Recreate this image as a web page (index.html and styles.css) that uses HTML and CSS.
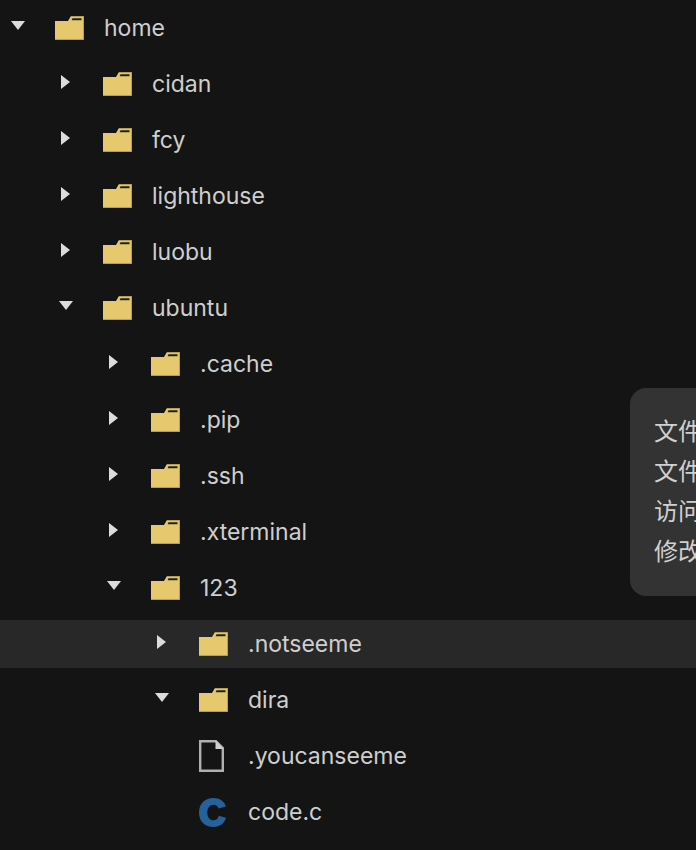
FILE: index.html
```html
<!DOCTYPE html>
<html lang="zh">
<head>
<meta charset="utf-8">
<title>File tree</title>
<link rel="stylesheet" href="styles.css">
</head>
<body>
<svg class="defs" width="0" height="0" aria-hidden="true">
  <defs>
    <symbol id="folder" viewBox="0 0 29 24">
      <path d="M0 5H13L16 0H29V24H0Z" fill="#e6c86e"/>
      <path d="M17.500 2.200H26.500V4.200H16.600Z" fill="#231f17"/>
      <path d="M0 23.300H29V24H0ZM28.300 0H29V24H28.300ZM16 0H29V.7H16Z" fill="#a88f4a"/>
    </symbol>
    <symbol id="open" viewBox="0 0 14 10"><path d="M0 0H14L7 9Z" fill="#dcdcdc"/></symbol>
    <symbol id="closed" viewBox="0 0 10 14"><path d="M0 0L9 7L0 14Z" fill="#dcdcdc"/></symbol>
  </defs>
</svg>
<ul class="tree">
  <li class="row l0"><span class="tw"><svg class="arrow-open"><use href="#open"/></svg></span><svg class="icon"><use href="#folder"/></svg><span class="name">home</span></li>
  <li class="row l1"><span class="tw"><svg class="arrow-closed"><use href="#closed"/></svg></span><svg class="icon"><use href="#folder"/></svg><span class="name">cidan</span></li>
  <li class="row l1"><span class="tw"><svg class="arrow-closed"><use href="#closed"/></svg></span><svg class="icon"><use href="#folder"/></svg><span class="name">fcy</span></li>
  <li class="row l1"><span class="tw"><svg class="arrow-closed"><use href="#closed"/></svg></span><svg class="icon"><use href="#folder"/></svg><span class="name">lighthouse</span></li>
  <li class="row l1"><span class="tw"><svg class="arrow-closed"><use href="#closed"/></svg></span><svg class="icon"><use href="#folder"/></svg><span class="name">luobu</span></li>
  <li class="row l1"><span class="tw"><svg class="arrow-open"><use href="#open"/></svg></span><svg class="icon"><use href="#folder"/></svg><span class="name">ubuntu</span></li>
  <li class="row l2"><span class="tw"><svg class="arrow-closed"><use href="#closed"/></svg></span><svg class="icon"><use href="#folder"/></svg><span class="name">.cache</span></li>
  <li class="row l2"><span class="tw"><svg class="arrow-closed"><use href="#closed"/></svg></span><svg class="icon"><use href="#folder"/></svg><span class="name">.pip</span></li>
  <li class="row l2"><span class="tw"><svg class="arrow-closed"><use href="#closed"/></svg></span><svg class="icon"><use href="#folder"/></svg><span class="name">.ssh</span></li>
  <li class="row l2"><span class="tw"><svg class="arrow-closed"><use href="#closed"/></svg></span><svg class="icon"><use href="#folder"/></svg><span class="name">.xterminal</span></li>
  <li class="row l2"><span class="tw"><svg class="arrow-open"><use href="#open"/></svg></span><svg class="icon"><use href="#folder"/></svg><span class="name">123</span></li>
  <li class="row l3 hover"><span class="tw"><svg class="arrow-closed"><use href="#closed"/></svg></span><svg class="icon"><use href="#folder"/></svg><span class="name">.notseeme</span></li>
  <li class="row l3"><span class="tw"><svg class="arrow-open"><use href="#open"/></svg></span><svg class="icon"><use href="#folder"/></svg><span class="name">dira</span></li>
  <li class="row l3"><span class="tw"></span><svg class="icon file" viewBox="0 0 25 32"><path d="M1.200 1.200H17L23.800 8V30.800H1.200Z" fill="none" stroke="#b0b0b0" stroke-width="2.400"/><path d="M16.500 0.500V9H24.500Z" fill="#cfcfcf"/></svg><span class="name">.youcanseeme</span></li>
  <li class="row l3"><span class="tw"></span><svg class="icon cfile" viewBox="0 0 27 29"><path d="M27 19.800C25.200 25.700 20.800 29 14.600 29C5.800 29 0 23.200 0 14.500C0 5.800 5.800 0 14.600 0C20.700 0 25.100 3 26.900 8.500L19.600 10.500C18.800 8.100 17 6.700 14.500 6.700C10.800 6.700 8.300 9.800 8.300 14.500C8.300 19.200 10.800 22.300 14.500 22.300C17.100 22.300 18.900 20.800 19.800 17.800Z" fill="#25619b"/></svg><span class="name">code.c</span></li>
</ul>
<div class="tooltip">
  <div>文件名称：.notseeme</div>
  <div>文件类型：文件夹</div>
  <div>访问时间：2023-01-01</div>
  <div>修改时间：2023-01-01</div>
</div>
</body>
</html>
```
FILE: styles.css
```css
html, body {
  margin: 0;
  height: 100%;
  background: #141414;
  overflow: hidden;
}
body {
  position: relative;
  font-family: Inter, "Noto Sans CJK SC", sans-serif;
  color: #cfcfcf;
}
.defs {
  position: absolute;
}
.tree {
  list-style: none;
  margin: 0;
  padding: 4px 0 0;
  display: flex;
  flex-direction: column;
  gap: 8px;
}
.row {
  display: flex;
  align-items: center;
  height: 48px;
  font-size: 23px;
}
.l0 { padding-left: 0; }
.l1 { padding-left: 48px; }
.l2 { padding-left: 96px; }
.l3 { padding-left: 144px; }
.hover { background: #282828; }
.tw {
  width: 36px;
  height: 48px;
  display: flex;
  align-items: center;
  justify-content: center;
  flex: none;
  padding-bottom: 4px;
  box-sizing: border-box;
}
.arrow-open { width: 14px; height: 10px; }
.arrow-closed { width: 10px; height: 14px; }
.icon {
  width: 29px;
  height: 24px;
  margin-left: 19px;
  flex: none;
}
.file { width: 25px; height: 32px; }
.cfile { width: 27px; height: 29px; }
.name {
  margin-left: 20px;
  white-space: nowrap;
}
.file + .name { margin-left: 24px; }
.cfile + .name { margin-left: 22px; }
.tooltip {
  position: absolute;
  left: 630px;
  top: 388px;
  width: 300px;
  height: 208px;
  box-sizing: border-box;
  padding: 24px;
  border-radius: 16px;
  background: #333333;
  font-size: 24px;
  line-height: 40px;
  white-space: nowrap;
  color: #d0d0d0;
}
```
